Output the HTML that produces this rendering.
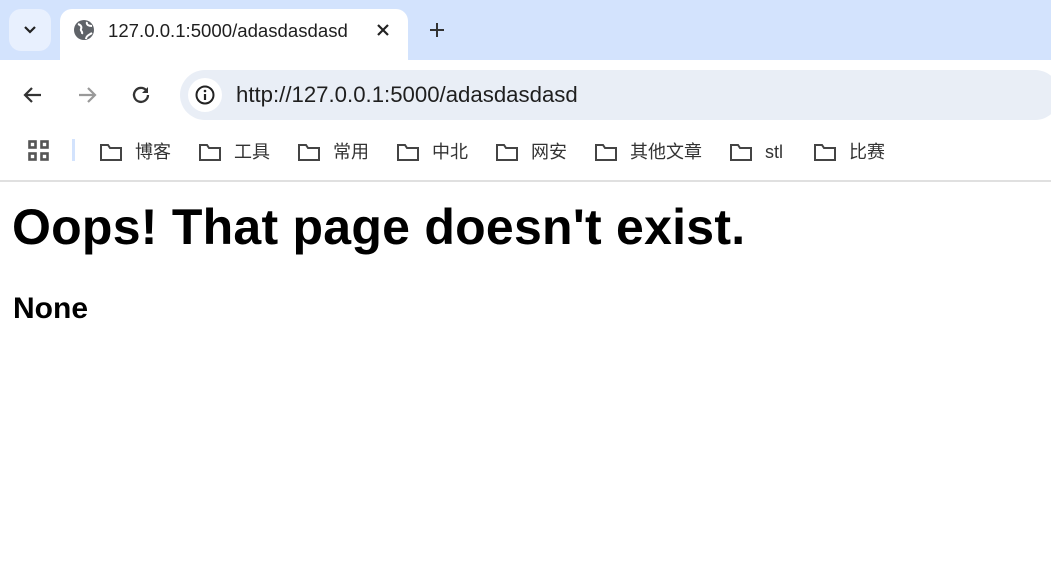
<!DOCTYPE html>
<html><head><meta charset="utf-8"><style>
body{margin:0;width:1051px;height:576px;overflow:hidden;background:#fff;font-family:"Liberation Sans","Noto Sans CJK SC",sans-serif;position:relative}
.strip{position:absolute;left:0;top:0;width:1051px;height:60px;background:#d3e3fd}
.tbtn{position:absolute;left:9px;top:9px;width:42px;height:42px;border-radius:12px;background:#e8f0fe}
.tab{position:absolute;left:60px;top:9px;width:348px;height:52px;background:#fff;border-radius:12px 12px 0 0}
.tabtxt{position:absolute;left:108px;top:20px;font-size:18.6px;color:#1f1f1f}
.toolbar{position:absolute;left:0;top:60px;width:1051px;height:120px;background:#fff;border-radius:12px 0 0 0;border-bottom:2px solid #e0e0e0}
.omni{position:absolute;left:180px;top:70px;width:880px;height:50px;border-radius:25px;background:#e9eef6}
.info{position:absolute;left:188px;top:78px;width:34px;height:34px;border-radius:17px;background:#fff}
.url{position:absolute;left:236px;top:82px;font-size:22.2px;color:#1f1f1f}
.bm{position:absolute;top:141px;height:22px;line-height:22px;font-size:18px;color:#333;display:flex;align-items:center}
.bm svg{margin-right:12px}
h1{position:absolute;left:12px;top:198px;margin:0;font-size:50px;line-height:58px;font-weight:bold;letter-spacing:0.25px}
h3{position:absolute;left:13px;top:292px;margin:0;font-size:30px;line-height:34px;font-weight:bold}
</style></head><body>
<div class="strip"></div>
<div class="tbtn"></div>
<svg style="position:absolute;left:22px;top:22px" width="16" height="16"><path d="M3 5l5 5 5-5" stroke="#222" stroke-width="2.2" fill="none"/></svg>
<div class="tab"></div>
<svg style="position:absolute;left:73px;top:19px" width="22" height="22"><circle cx="11" cy="11" r="10" fill="#5f6368"/><path d="M5 5c3 1 4 3 3 5s2 2 1 5M14 3c-1 3 2 4 5 4M13 20c0-3 3-4 6-6" stroke="#fff" stroke-width="2" fill="none"/></svg>
<div class="tabtxt">127.0.0.1:5000/adasdasdasd</div>
<svg style="position:absolute;left:376px;top:23px" width="14" height="14"><path d="M2 2l10 10M12 2L2 12" stroke="#222" stroke-width="2.2"/></svg>
<svg style="position:absolute;left:429px;top:22px" width="16" height="16"><path d="M8 1v14M1 8h14" stroke="#333" stroke-width="2"/></svg>
<div class="toolbar"></div>
<svg style="position:absolute;left:22px;top:84px" width="22" height="22"><path d="M19 11H4M10 4l-7 7 7 7" stroke="#333" stroke-width="2.2" fill="none"/></svg>
<svg style="position:absolute;left:76px;top:84px" width="22" height="22"><path d="M3 11h15M12 4l7 7-7 7" stroke="#999" stroke-width="2.2" fill="none"/></svg>
<svg style="position:absolute;left:130px;top:84px" width="22" height="22"><path d="M18 11a7 7 0 1 1-2-5" stroke="#333" stroke-width="2.3" fill="none"/><path d="M18 3v6h-6z" fill="#333"/></svg>
<div class="omni"></div><div class="info"></div>
<svg style="position:absolute;left:195px;top:85px" width="20" height="20"><circle cx="10" cy="10" r="8.5" stroke="#222" stroke-width="2" fill="none"/><path d="M10 9v6" stroke="#222" stroke-width="2.2"/><circle cx="10" cy="6" r="1.3" fill="#222"/></svg>
<div class="url">http://127.0.0.1:5000/adasdasdasd</div>
<svg style="position:absolute;left:28px;top:140px" width="22" height="22"><g fill="none" stroke="#555" stroke-width="2.6"><rect x="1.5" y="1.5" width="6" height="6"/><rect x="13.5" y="1.5" width="6" height="6"/><rect x="1.5" y="13.5" width="6" height="6"/><rect x="13.5" y="13.5" width="6" height="6"/></g></svg>
<div style="position:absolute;left:72px;top:139px;width:3px;height:22px;background:#d3e3fd"></div>
<div class="bm" style="left:99px"><svg width="24" height="20"><path d="M2 3h7l2 3h11v12H2z" fill="none" stroke="#444" stroke-width="2"/></svg>博客</div>
<div class="bm" style="left:198px"><svg width="24" height="20"><path d="M2 3h7l2 3h11v12H2z" fill="none" stroke="#444" stroke-width="2"/></svg>工具</div>
<div class="bm" style="left:297px"><svg width="24" height="20"><path d="M2 3h7l2 3h11v12H2z" fill="none" stroke="#444" stroke-width="2"/></svg>常用</div>
<div class="bm" style="left:396px"><svg width="24" height="20"><path d="M2 3h7l2 3h11v12H2z" fill="none" stroke="#444" stroke-width="2"/></svg>中北</div>
<div class="bm" style="left:495px"><svg width="24" height="20"><path d="M2 3h7l2 3h11v12H2z" fill="none" stroke="#444" stroke-width="2"/></svg>网安</div>
<div class="bm" style="left:594px"><svg width="24" height="20"><path d="M2 3h7l2 3h11v12H2z" fill="none" stroke="#444" stroke-width="2"/></svg>其他文章</div>
<div class="bm" style="left:729px"><svg width="24" height="20"><path d="M2 3h7l2 3h11v12H2z" fill="none" stroke="#444" stroke-width="2"/></svg><span style="line-height:22px">stl</span></div>
<div class="bm" style="left:813px"><svg width="24" height="20"><path d="M2 3h7l2 3h11v12H2z" fill="none" stroke="#444" stroke-width="2"/></svg>比赛</div>
<h1>Oops! That page doesn't exist.</h1>
<h3>None</h3>
</body></html>
